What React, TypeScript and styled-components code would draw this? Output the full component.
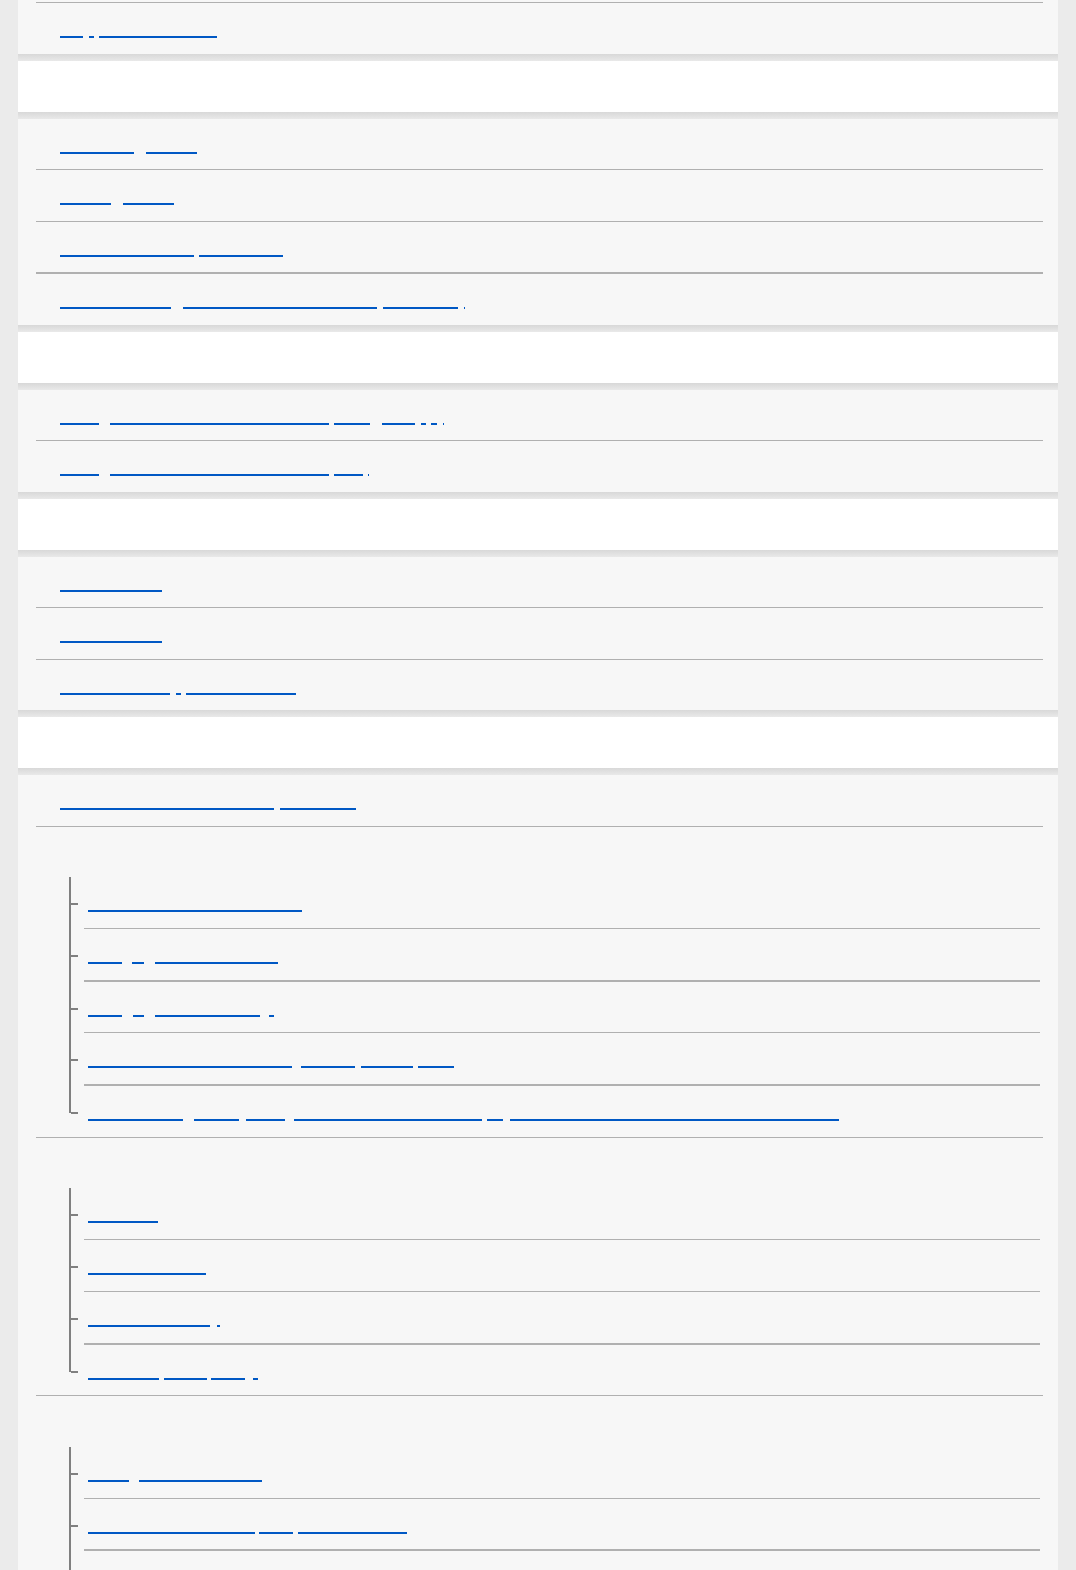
import styled, { createGlobalStyle } from 'styled-components';

type Part = [string, number, number];
type Item = { parts: Part[]; thick?: boolean };
type Group = { label: string; items: Item[] };

const GlobalStyle = createGlobalStyle`
  body {
    margin: 0;
    background: #ebebeb;
    font-family: 'Liberation Sans', Arial, sans-serif;
    font-size: 16px;
  }
`;

// the page is scrolled: the first row sits above the window
const topRows: Item[] = [
  { parts: [['Home', 60, 100]] },
  { parts: [['Top', 60, 83], ['/', 89, 94], ['Camera functions', 99, 217]] },
];

const usingRows: Item[] = [
  { parts: [['Shooting', 60, 134], ['mode', 146, 197]] },
  { parts: [['Shoot', 60, 111], ['modes', 123, 174]] },
  { parts: [['Auto focus settings', 60, 194], ['Focus area', 199, 283]], thick: true },
  {
    parts: [
      ['Exposure', 60, 171],
      ['Exposure compensation value', 183, 377],
      ['Metering', 383, 458],
      ['.', 464, 465],
    ],
  },
];

const viewRows: Item[] = [
  {
    parts: [
      ['Using', 60, 99],
      ['the playback zoom function', 110, 329],
      ['image', 334, 370],
      ['group', 382, 415],
      ['p', 421, 426],
      ['y', 431, 437],
      [',', 443, 444],
    ],
  },
  {
    parts: [
      ['Using', 60, 99],
      ['the playback index function', 110, 329],
      ['view', 334, 363],
      ['.', 368, 369],
    ],
  },
];

const editRows: Item[] = [
  { parts: [['Protecting', 60, 162]] },
  { parts: [['Rotating', 60, 162]] },
  { parts: [['Deleting', 60, 170], ['p', 176, 181], ['multiple images', 186, 296]] },
];

const networkRows: Item[] = [{ parts: [['Connecting to a smartphone', 60, 274], ['remotely', 280, 356]] }];

const groups: Group[] = [
  {
    label: 'Wi-Fi functions',
    items: [
      { parts: [['Control with smartphone', 88, 302]] },
      { parts: [['Send', 88, 122], ['to', 132, 144], ['Smartphone', 155, 278]], thick: true },
      { parts: [['Send', 88, 122], ['to', 133, 144], ['Computer', 155, 260], ['.', 269, 274]] },
      {
        parts: [
          ['Viewing on a TV with Wi-Fi', 88, 292],
          ['Airplane', 301, 355],
          ['Mode', 361, 413],
          ['WPS', 418, 454],
        ],
        thick: true,
      },
      {
        parts: [
          ['Access point', 88, 183],
          ['Set.', 194, 239],
          ['Edit', 246, 285],
          ['Device name of the camera', 294, 482],
          ['p', 487, 503],
          ['Reset the network settings of the camera', 510, 839],
        ],
      },
    ],
  },
  {
    label: 'Applications',
    items: [
      { parts: [['Imaging', 88, 158]] },
      { parts: [['Application', 88, 206]] },
      { parts: [['Application list', 88, 210], ['.', 217, 220]], thick: true },
      { parts: [['Start', 88, 159], ['app', 164, 207], ['list', 211, 245], ['.', 253, 258]] },
    ],
  },
  {
    label: 'Computers',
    items: [
      { parts: [['Using', 88, 129], ['with your computer', 139, 262]] },
      {
        parts: [
          ['Connecting the camera', 88, 255],
          ['USB', 259, 293],
          ['Mass Storage', 298, 407],
        ],
        thick: true,
      },
      { parts: [['Importing images to the computer', 88, 300]] },
    ],
  },
];

function LinkText({ parts, start }: { parts: Part[]; start: number }) {
  let prev = start;
  return (
    <LinkLine href="#">
      {parts.map(([text, a, b], i) => {
        const gap = a - prev;
        prev = b;
        return (
          <Word key={i} $gap={gap} $w={b - a}>
            {text}
          </Word>
        );
      })}
    </LinkLine>
  );
}

function Block({ rows }: { rows: Item[] }) {
  return (
    <ListBlock>
      {rows.map((r, i) => (
        <Row key={i} $thick={r.thick}>
          <LinkText parts={r.parts} start={60} />
        </Row>
      ))}
    </ListBlock>
  );
}

function Header({ title }: { title: string }) {
  return (
    <HeaderBand>
      <HeaderTitle>{title}</HeaderTitle>
    </HeaderBand>
  );
}

export default function App() {
  return (
    <>
      <GlobalStyle />
      <Page>
        <Block rows={topRows} />
        <Header title="Using shooting functions" />
        <Block rows={usingRows} />
        <Header title="Viewing" />
        <Block rows={viewRows} />
        <Header title="Deleting" />
        <Block rows={editRows} />
        <Header title="Using network functions" />
        <ListBlock>
          {networkRows.map((r, i) => (
            <Row key={i} $thick={r.thick}>
              <LinkText parts={r.parts} start={60} />
            </Row>
          ))}
          {groups.map((g) => (
            <GroupBox key={g.label}>
              <GroupLabel>{g.label}</GroupLabel>
              <Tree>
                {g.items.map((it, i) => {
                  const last = i === g.items.length - 1;
                  return (
                    <TreeItem key={i}>
                      <Connector $last={last}>
                        <Tick />
                      </Connector>
                      <SubRow $thick={it.thick} $last={last}>
                        <LinkText parts={it.parts} start={88} />
                      </SubRow>
                    </TreeItem>
                  );
                })}
              </Tree>
            </GroupBox>
          ))}
        </ListBlock>
      </Page>
    </>
  );
}

const Page = styled.div`
  margin-top: -48.5px;
  padding: 0 18px;
`;

const ListBlock = styled.div`
  background: #f7f7f7;
  padding: 0 15px 0 18px;
`;

const Row = styled.div<{ $thick?: boolean }>`
  height: 50.5px;
  padding-left: 24px;
  border-bottom: ${(p) => (p.$thick ? 2 : 1)}px solid #b0b0b0;

  &:last-child {
    border-bottom: none;
  }
`;

const LinkLine = styled.a`
  display: flex;
  align-items: flex-start;
  padding-top: 13px;
  text-decoration: none;
`;

const Word = styled.span<{ $gap: number; $w: number }>`
  display: block;
  flex: none;
  margin-left: ${(p) => p.$gap}px;
  width: ${(p) => p.$w}px;
  height: 20px;
  overflow: hidden;
  white-space: nowrap;
  color: transparent;
  font-size: 11px;
  line-height: 20px;
  border-bottom: 2px solid #0058c4;
`;

const HeaderBand = styled.div`
  &::before,
  &::after {
    content: '';
    display: block;
    height: 7px;
    background: linear-gradient(#d8d8d8, #e9e9e9);
  }
`;

const HeaderTitle = styled.h2`
  margin: 0;
  height: 51px;
  background: #ffffff;
  color: transparent;
  font-size: 16px;
  font-weight: bold;
  line-height: 51px;
  padding-left: 42px;
`;

const GroupBox = styled.div`
  border-bottom: 1px solid #b0b0b0;

  &:last-child {
    border-bottom: none;
  }
`;

const GroupLabel = styled.div`
  height: 50.5px;
  padding-left: 24px;
  line-height: 50px;
  color: transparent;
`;

const Tree = styled.ul`
  list-style: none;
  margin: 0 0 0 33px;
  padding: 0;
`;

const TreeItem = styled.li`
  display: flex;
`;

const Connector = styled.div<{ $last: boolean }>`
  flex: none;
  box-sizing: border-box;
  width: 15px;
  border-left: 2px solid #808080;
  align-self: ${(p) => (p.$last ? 'flex-start' : 'stretch')};
  height: ${(p) => (p.$last ? '27px' : 'auto')};
`;

const Tick = styled.div`
  margin-top: 26px;
  width: 7px;
  height: 2px;
  background: #808080;
`;

const SubRow = styled.div<{ $thick?: boolean; $last: boolean }>`
  flex: 1;
  height: 50.75px;
  margin-right: 3px;
  padding-left: 4px;
  border-bottom: ${(p) => (p.$last ? 'none' : `${p.$thick ? 2 : 1}px solid #b0b0b0`)};
`;
